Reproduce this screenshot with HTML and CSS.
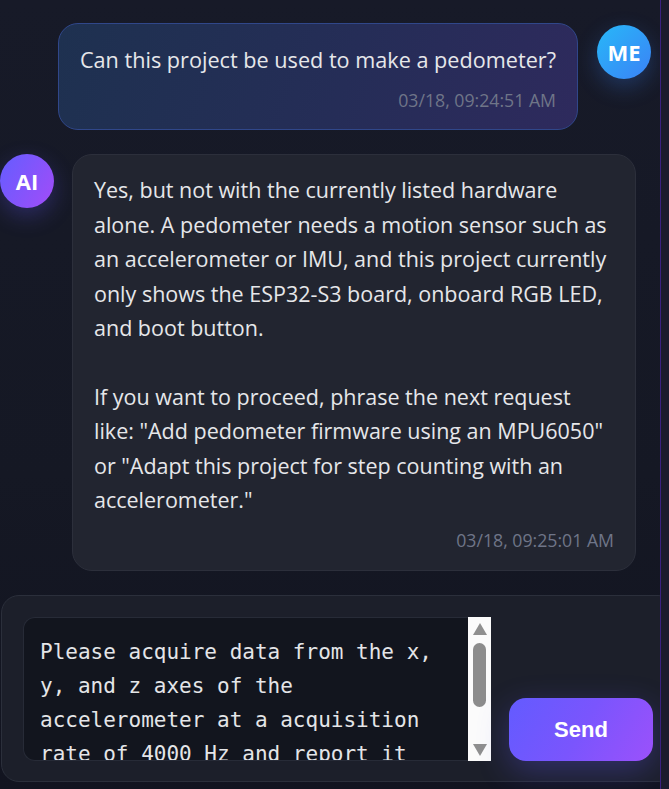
FILE: index.html
```html
<!DOCTYPE html>
<html lang="en">
<head>
<meta charset="utf-8">
<title>Chat</title>
<link rel="stylesheet" href="styles.css">
</head>
<body>
<div class="app">
  <main class="chat">
    <div class="messages">
      <div class="row row-user">
        <div class="bubble bubble-user">
          <div class="msg-text">Can this project be used to make a pedometer?</div>
          <div class="msg-time">03/18, 09:24:51 AM</div>
        </div>
        <div class="avatar avatar-me">ME</div>
      </div>
      <div class="row row-ai">
        <div class="avatar avatar-ai">AI</div>
        <div class="bubble bubble-ai">
          <div class="msg-text">Yes, but not with the currently listed hardware alone. A pedometer needs a motion sensor such as an accelerometer or IMU, and this project currently only shows the ESP32-S3 board, onboard RGB LED, and boot button.

If you want to proceed, phrase the next request like: "Add pedometer firmware using an MPU6050" or "Adapt this project for step counting with an accelerometer."</div>
          <div class="msg-time">03/18, 09:25:01 AM</div>
        </div>
      </div>
    </div>
    <div class="composer">
      <div class="input-wrap">
        <textarea class="input" rows="4">Please acquire data from the x, y, and z axes of the accelerometer at a acquisition rate of 4000 Hz and report it</textarea>
        <div class="scrollbar">
          <span class="sb-arrow sb-up"></span>
          <span class="sb-thumb"></span>
          <span class="sb-arrow sb-down"></span>
        </div>
      </div>
      <button class="send" type="button">Send</button>
    </div>
  </main>
  <aside class="side"></aside>
</div>
</body>
</html>
```
FILE: styles.css
```css
html, body {
  margin: 0;
  padding: 0;
  height: 100%;
  overflow: hidden;
}
body {
  background: #151824;
  font-family: "Open Sans", "Noto Sans", sans-serif;
  color: #e6e7ea;
}
.app {
  display: flex;
  height: 789px;
}
.chat {
  width: 660px;
  flex: none;
  display: flex;
  flex-direction: column;
  overflow: hidden;
  border-right: 1px solid #3a2180;
  background: linear-gradient(180deg, #171a28 0%, #151824 60%, #121420 100%);
}
.side {
  flex: 1;
  background: #1b1b2d;
}
.messages {
  flex: 1;
  display: flex;
  flex-direction: column;
  gap: 24px;
  padding: 23px 9px 0 0;
}
.row {
  display: flex;
  align-items: flex-start;
}
.row-user {
  justify-content: flex-end;
  gap: 19px;
}
.row-ai {
  gap: 18px;
}
.avatar {
  width: 54px;
  height: 54px;
  flex: none;
  border-radius: 50%;
  display: flex;
  align-items: center;
  justify-content: center;
  font-weight: 700;
  font-size: 22px;
  color: #fff;
  letter-spacing: 0;
}
.avatar-me {
  margin-top: 2px;
  background: linear-gradient(135deg, #27b8f8 0%, #3b82f6 100%);
  box-shadow: 0 8px 22px rgba(59, 130, 246, 0.28);
}
.avatar-ai {
  background: linear-gradient(120deg, #645dff 0%, #a24cf8 100%);
  box-shadow: 0 8px 22px rgba(99, 91, 255, 0.28);
}
.bubble {
  border-radius: 20px;
  border: 1px solid;
  font-size: 21.5px;
  line-height: 1.6;
}
.bubble-user {
  padding: 19px 21px 18px 21px;
  font-size: 21.65px;
  line-height: 34.4px;
  background: linear-gradient(110deg, #1e3150 0%, #252d57 55%, #2e2a5d 100%);
  border-color: #30478a;
  text-align: right;
}
.bubble-ai {
  width: 520px;
  padding: 18px 21px 19px;
  background: #222530;
  border-color: #2c2f3b;
}
.msg-text {
  white-space: pre-wrap;
}
.msg-time {
  margin-top: 13px;
  font-size: 17.7px;
  line-height: 21px;
  color: #6f7588;
  text-align: right;
}
.composer {
  margin: 0 0 7px 1px;
  width: 632px;
  padding: 21px 20px 20px 21px;
  background: #1c1f2a;
  border: 1px solid #2b2f3b;
  border-radius: 18px;
  display: flex;
  align-items: flex-end;
  gap: 18px;
  flex: none;
}
.input-wrap {
  display: flex;
  height: 144px;
  flex: none;
}
.input {
  width: 445px;
  height: 144px;
  box-sizing: border-box;
  margin: 0;
  padding: 17px 24px 0 16px;
  background: #12151e;
  border: 1px solid #272b37;
  border-right: none;
  border-radius: 12px 0 0 12px;
  color: #e4e5e8;
  font-family: "DejaVu Sans Mono", monospace;
  font-size: 21px;
  line-height: 34px;
  resize: none;
  overflow: hidden;
  outline: none;
}
.scrollbar {
  width: 23px;
  height: 144px;
  background: #fbfbfb;
  display: flex;
  flex-direction: column;
  align-items: center;
  padding: 6px 0 5px;
  box-sizing: border-box;
}
.sb-arrow {
  width: 0;
  height: 0;
  border-left: 7px solid transparent;
  border-right: 7px solid transparent;
}
.sb-up {
  border-bottom: 12px solid #8f8f8f;
}
.sb-down {
  margin-top: auto;
  border-top: 12px solid #8f8f8f;
}
.sb-thumb {
  margin-top: 8px;
  width: 13px;
  height: 64px;
  border-radius: 7px;
  background: #8c8c8c;
}
.send {
  width: 144px;
  height: 63px;
  flex: none;
  border: none;
  border-radius: 17px;
  background: linear-gradient(120deg, #635bff 0%, #7a55fd 50%, #9b51fb 100%);
  color: #fff;
  font-family: "Liberation Sans", Arial, sans-serif;
  font-weight: 700;
  font-size: 22px;
  box-shadow: 0 10px 32px rgba(99, 91, 255, 0.3);
  cursor: pointer;
}
```
